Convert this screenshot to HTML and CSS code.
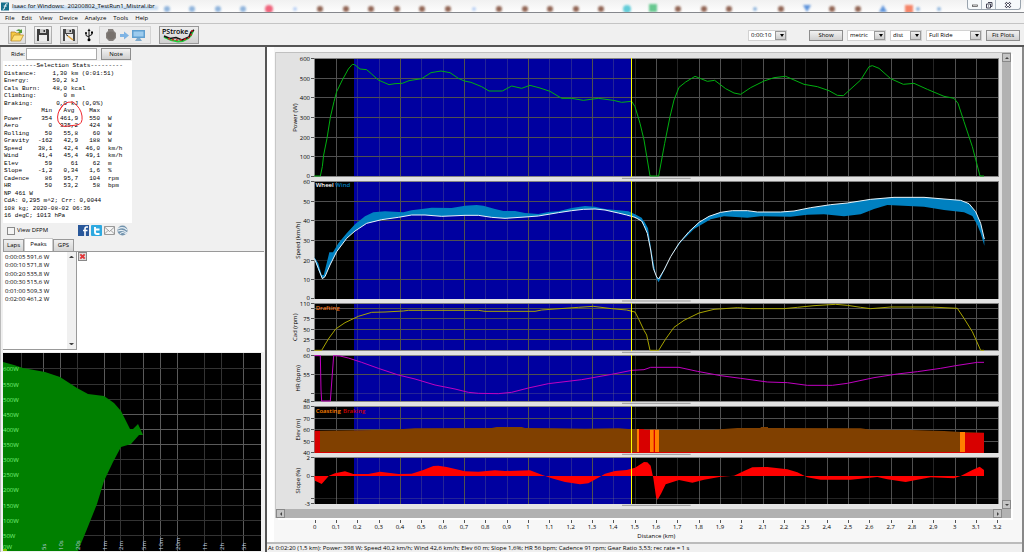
FILE: index.html
```html
<!DOCTYPE html>
<html lang="en">
<head>
<meta charset="utf-8">
<meta name="viewport" content="width=device-width, initial-scale=1">
<title>Isaac for Windows: 20200802_TestRun1_Mistral.ibr</title>
<link rel="stylesheet" href="styles.css">
</head>
<body>
<header class="titlebar">
  <svg class="glass" viewBox="0 0 1024 12" preserveAspectRatio="none" aria-hidden="true">
    <defs><filter id="soft" x="-50%" y="-50%" width="200%" height="200%"><feGaussianBlur stdDeviation="1"/></filter></defs>
    <g filter="url(#soft)">
      <g fill="#8fb4dc"><circle cx="167" cy="9" r="3"/><circle cx="192" cy="9" r="3"/><circle cx="218" cy="9" r="3"/><circle cx="243" cy="9" r="3"/><circle cx="755" cy="9" r="2"/><circle cx="918" cy="9" r="2"/><circle cx="939" cy="9" r="2"/></g>
      <g fill="#b9d0f5"><circle cx="295" cy="9" r="2"/><circle cx="474" cy="9" r="2"/></g>
      <g fill="#906452"><circle cx="320" cy="9" r="3"/><circle cx="346" cy="9" r="3"/><circle cx="371" cy="9" r="3"/><circle cx="397" cy="9" r="3"/><circle cx="422" cy="9" r="3"/><circle cx="448" cy="9" r="3"/><circle cx="499" cy="9" r="3"/><circle cx="525" cy="9" r="3"/><circle cx="550" cy="9" r="3"/><circle cx="576" cy="9" r="3"/><circle cx="601" cy="9" r="3"/><circle cx="678" cy="9" r="3"/><circle cx="704" cy="9" r="3"/><circle cx="729" cy="9" r="3"/><circle cx="781" cy="9" r="3"/><circle cx="832" cy="9" r="3"/><circle cx="858" cy="9" r="3"/></g>
      <circle cx="269" cy="9" r="4" fill="#f0647c"/>
      <circle cx="627" cy="9" r="4" fill="#62ccd8"/>
      <rect x="649" y="4" width="8" height="8" fill="#68c890"/>
      <path d="M803 5h8l-4 7zM883 5l4 7h-8z" fill="#5b92da"/>
      <rect x="905" y="5" width="8" height="8" fill="#f58468"/>
      <path d="M12 8H158" stroke="#c4daf1" stroke-width="4"/>
    </g>
  </svg>
  <svg class="app-icon" viewBox="0 0 9 9" aria-hidden="true"><rect width="9" height="9" fill="#176f8b"/><path d="M5.500 1.500H7.500M5.500 1.500L3.500 7.500H2M3 4H6.500" stroke="#fff" fill="none"/></svg>
  <span class="title">Isaac for Windows:&nbsp; 20200802_TestRun1_Mistral.ibr</span>
  <div class="window-buttons">
    <button aria-label="Minimize"><svg viewBox="0 0 8 8"><rect x="1.500" y="4" width="5" height="1.500" fill="#fff" stroke="#444" stroke-width=".7"/></svg></button>
    <button aria-label="Restore"><svg viewBox="0 0 8 8"><path d="M3 1.500H7V5.500H5.500M1.500 3H5.500V7H1.500ZM3 5H4" fill="none" stroke="#445"/></svg></button>
    <button class="close" aria-label="Close"><svg viewBox="0 0 8 8"><path d="M1.500 1.500L6.500 6.500M6.500 1.500L1.500 6.500" stroke="#445" stroke-width="2.400"/><path d="M1.500 1.500L6.500 6.500M6.500 1.500L1.500 6.500" stroke="#fff"/></svg></button>
  </div>
</header>

<nav class="menubar">
  <button>File</button><button>Edit</button><button>View</button><button>Device</button><button>Analyze</button><button>Tools</button><button>Help</button>
</nav>

<div class="toolbar">
  <button class="tool" aria-label="Open"><svg viewBox="0 0 14 14"><path d="M1 13V4h4l1 1h4v3" fill="#f5c944" stroke="#a9791a" stroke-width=".7"/><path d="M1 13L4 7h9.500l-3 6z" fill="#ffe27a" stroke="#b88520" stroke-width=".7"/><path d="M6 3q2-3 5-1l1-1v4H8l1.500-1.500Q8 2.500 6 3" fill="#4f9b35"/></svg></button>
  <button class="tool" aria-label="Save"><svg viewBox="0 0 14 14"><path d="M1 1h11l1 1v11H1z" fill="#3d3d3d"/><path d="M4 1h6v4H4z" fill="#c9c9c9"/><path d="M7.500 2h1.500v2H7.500z" fill="#333"/><path d="M3 7h8v6H3z" fill="#eee"/></svg></button>
  <button class="tool" aria-label="Save as"><svg viewBox="0 0 14 14"><path d="M1 1h11l1 1v11H1z" fill="#484848"/><path d="M4 1h6v4H4z" fill="#c9c9c9"/><path d="M7.500 2h1.500v2H7.500z" fill="#333"/><path d="M3 6h8v7H3z" fill="#eee"/><path d="M6 8l5 4" stroke="#e0a43a" stroke-width="1.600"/><path d="M4 6.500l2 1.500" stroke="#222"/></svg></button>
  <button class="tool flat" aria-label="USB"><svg viewBox="0 0 14 14"><path d="M7 2V11M7 9L4 7.500V5M7 8L10 6.500V4.500" fill="none" stroke="#111"/><path d="M5.500 3L7 .5 8.500 3z" fill="#111"/><circle cx="7" cy="11.800" r="1.500"/><circle cx="4" cy="5" r="1"/><path d="M9 3.500h2v2H9z"/></svg></button>
  <button class="tool wide" aria-label="Download from device" disabled><svg viewBox="0 0 42 14"><path d="M4 1h5l1 2 2 2v5l-3 3H5l-3-3V5l2-2z" fill="#85807d"/><circle cx="7" cy="7.500" r="4" fill="#77716d"/><path d="M16 6h4V3.500l5 4-5 4V9h-4z" fill="#7fb4e4"/><path d="M28 2h13v8H28z" fill="#5f9fd0"/><path d="M29.500 3.500h10v5h-10z" fill="#9ccbee"/><path d="M33 10h3l2 3h-7z" fill="#7da9cc"/></svg></button>
  <button class="tool pstroke" aria-label="PStroke"><svg viewBox="0 0 38 16"><path d="M4 10Q11 14 18 14.500Q30 14 33 4" fill="none" stroke="#24c83a" stroke-width="2"/><path d="M4 9L10 11.500L16 10.500L22 13L29 10L31 5L34 3" fill="none" stroke="#111" stroke-width="1.600"/><path d="M8 11.500Q16 14 24 12.500T32 3" fill="none" stroke="#d42020" stroke-width="1.500" stroke-dasharray="2 2"/><text x="2" y="7">PStroke</text></svg></button>
  <div class="controls">
    <label class="pick time"><select aria-label="Smoothing"><option>0:00:10</option></select></label>
    <button class="btn show">Show</button>
    <label class="pick units"><select aria-label="Units"><option>metric</option></select></label>
    <label class="pick axis"><select aria-label="X axis"><option>dist</option></select></label>
    <label class="pick range"><select aria-label="Range"><option>Full Ride</option></select></label>
    <button class="btn fit">Fit Plots</button>
  </div>
</div>

<main class="workspace">
  <aside class="side">
    <div class="ride"><label for="ride">Ride:</label><input id="ride" type="text"><button class="btn">Note</button></div>
    <section class="stats">
      <div>---------Selection Stats---------</div>
      <table>
        <tr><th>Distance:</th><td>1,30</td><td class="unit">km (0:01:51)</td></tr>
        <tr><th>Energy:</th><td>50,2</td><td class="unit">kJ</td></tr>
        <tr><th>Cals Burn:</th><td>48,0</td><td class="unit">kcal</td></tr>
        <tr><th>Climbing:</th><td>0</td><td class="unit">m</td></tr>
        <tr><th>Braking:</th><td>0,0</td><td class="unit">kJ (0,0%)</td></tr>
      </table>
      <table class="cols">
        <tr><th></th><td>Min</td><td>Avg&nbsp;</td><td>Max</td><td></td></tr>
        <tr><th>Power</th><td>354</td><td>461,9</td><td>550</td><td class="unit">W</td></tr>
        <tr><th>Aero</th><td>0</td><td>335,2</td><td>424</td><td class="unit">W</td></tr>
        <tr><th>Rolling</th><td>50</td><td>55,8</td><td>60</td><td class="unit">W</td></tr>
        <tr><th>Gravity</th><td>-162</td><td>42,9</td><td>188</td><td class="unit">W</td></tr>
        <tr><th>Speed</th><td>38,1</td><td>42,4</td><td>46,0</td><td class="unit">km/h</td></tr>
        <tr><th>Wind</th><td>41,4</td><td>45,4</td><td>49,1</td><td class="unit">km/h</td></tr>
        <tr><th>Elev</th><td>59</td><td>61</td><td>62</td><td class="unit">m</td></tr>
        <tr><th>Slope</th><td>-1,2</td><td>0,34</td><td>1,6</td><td class="unit">%</td></tr>
        <tr><th>Cadence</th><td>86</td><td>95,7</td><td>104</td><td class="unit">rpm</td></tr>
        <tr><th>HR</th><td>50</td><td>53,2</td><td>58</td><td class="unit">bpm</td></tr>
      </table>
      <div>NP 461 W</div>
      <div>CdA: 0,295 m^2; Crr: 0,0044</div>
      <div>108 kg; 2020-08-02 06:36</div>
      <div>16 degC; 1013 hPa</div>
      <svg class="mark" viewBox="0 0 30 30" aria-hidden="true"><path d="M7 5Q12 1 17 2Q25 8 26 16Q27 24 21 25L12 26Q5 28 2 21Q0 13 7 5L3 11" fill="none" stroke="#f02a30"/></svg>
    </section>
    <div class="share">
      <label><input type="checkbox"> View DFPM</label>
      <button aria-label="Facebook"><svg viewBox="0 0 11 11"><rect width="11" height="11" fill="#28579a"/><path d="M10 2H8.500Q7 2 7 4V11M5 5.500H9.500" fill="none" stroke="#fff" stroke-width="1.600"/></svg></button>
      <button aria-label="Twitter"><svg viewBox="0 0 11 11"><rect width="11" height="11" rx="1" fill="#2da9e0"/><path d="M4 2V7Q4 9 6 9H8.500M4 4.500H8.500" fill="none" stroke="#fff" stroke-width="1.900"/></svg></button>
      <button aria-label="Mail"><svg viewBox="0 0 11 11"><path d="M.5 1.500h10v8H.5z" fill="#f4f4f4" stroke="#999"/><path d="M.5 2L5.500 6.500 10.500 2M.5 9L4 5.500M10.500 9L7 5.500" fill="none" stroke="#888" stroke-width=".8"/></svg></button>
      <button aria-label="Google Earth"><svg viewBox="0 0 11 11"><circle cx="5.500" cy="5.500" r="5" fill="#7393ad"/><path d="M1 4Q6 1 10 5M1 6Q6 4 10 8M3 9Q5 6 9 9" fill="none" stroke="#e7f0f6" stroke-width="1.200"/></svg></button>
    </div>
    <div class="tabs" role="tablist">
      <button role="tab">Laps</button><button role="tab" class="active" aria-selected="true">Peaks</button><button role="tab">GPS</button>
    </div>
    <div class="peaks">
      <div class="list">
        <ul><li>0:00:05 591,6 W</li><li>0:00:10 571,8 W</li><li>0:00:20 535,8 W</li><li>0:00:30 515,6 W</li><li>0:01:00 509,3 W</li><li>0:02:00 461,2 W</li></ul>
        <div class="listbar"><i class="up"></i><i class="down"></i></div>
      </div>
      <button class="delete" aria-label="Delete peak"><svg viewBox="0 0 8 8"><path d="M1.500 1.500L6.500 6.500M6.500 1.500L1.500 6.500" stroke="#e2383c" stroke-width="2.200"/></svg></button>
    </div>
    <svg class="curve" viewBox="3 352 258 198" role="img" aria-label="Peak power curve">
      <rect x="3" y="352" width="258" height="198"/>
      <g shape-rendering="crispEdges">
        <path class="line dim" d="M21.500 352V550M77.500 352V550M120.500 352V550M204.500 352V550M221.500 352V550"/>
        <path class="line" d="M43.500 352V550M60.500 352V550M104.500 352V550M143.500 352V550M160.500 352V550M177.500 352V550M243.500 352V550"/>
        <path class="line dim" d="M3 367.500H261M3 383.500H261M3 398.500H261M3 458.500H261M3 473.500H261M3 504.500H261M3 519.500H261M3 534.500H261"/>
        <path class="line" d="M3 413.500H261M3 428.500H261M3 443.500H261M3 488.500H261"/>
      </g>
      <path fill="#008000" d="M3 361L14 364 23 367 45 371 60 376 77 387 88 393 104 395 114 402 121 410 130 428H133L138 423 143 434H139L131 443 121 446 113 461 104 480 97 503 87 528 80 545 78 550H3z"/>
      <g class="watts"><text x="3" y="370">600W</text><text x="3" y="386">550W</text><text x="3" y="401">500W</text><text x="3" y="416">450W</text><text x="3" y="431">400W</text><text x="3" y="446">350W</text><text x="3" y="461">300W</text><text x="3" y="476">250W</text><text x="3" y="491">200W</text><text x="3" y="507">150W</text><text x="3" y="522">100W</text><text x="3" y="537">50W</text><text x="3" y="548">0W</text></g>
      <g class="times"><text transform="translate(46 549)rotate(-90)">5s</text><text transform="translate(63 549)rotate(-90)">10s</text><text transform="translate(80 549)rotate(-90)">20s</text><text transform="translate(107 549)rotate(-90)">1m</text><text transform="translate(123 549)rotate(-90)">2m</text><text transform="translate(146 549)rotate(-90)">5m</text><text transform="translate(163 549)rotate(-90)">10m</text><text transform="translate(180 549)rotate(-90)">20m</text><text transform="translate(207 549)rotate(-90)">1h</text><text transform="translate(224 549)rotate(-90)">2h</text><text transform="translate(246 549)rotate(-90)">5h</text></g>
      <path d="M3 549h4" stroke="#ff0"/>
    </svg>
  </aside>

  <section class="main">
    <div class="frame">
      <svg class="plots" viewBox="33 159 2178 1368" role="img" aria-label="Ride plots">
        <defs>
          <path id="minor" d="M278 0V1600M342 0V1600M470 0V1600M534 0V1600M662 0V1600M726 0V1600M854 0V1600M918 0V1600M1046 0V1600M1110 0V1600M1238 0V1600M1430 0V1600M1622 0V1600M1814 0V1600M2006 0V1600"/>
          <path id="major" d="M214 0V1600M406 0V1600M598 0V1600M790 0V1600M982 0V1600M1174 0V1600M1302 0V1600M1366 0V1600M1494 0V1600M1558 0V1600M1686 0V1600M1750 0V1600M1878 0V1600M1942 0V1600M2070 0V1600M2134 0V1600"/>
          <path id="panes" d="M147 174H2202V531H147zM147 543H2202V897H147zM147 910H2202V1053H147zM147 1065H2202V1206H147zM147 1218H2202V1359H147zM147 1371H2202V1512H147z"/>
          <clipPath id="inside"><use href="#panes"/></clipPath>
        </defs>
        <use href="#panes"/>
        <g clip-path="url(#inside)" shape-rendering="crispEdges">
          <rect x="267" y="159" width="831" height="1368" fill="#0000a0"/>
          <use href="#minor" class="grid minor"/>
          <use href="#major" class="grid"/>
          <path class="grid" d="M147 236H2202M147 293H2202M147 353H2202M147 412H2202M147 470H2202M147 604H2202M147 661H2202M147 721H2202M147 838H2202M147 925H2202M147 956H2202M147 988H2202M147 1018H2202M147 1123H2202M147 1255H2202M147 1289H2202M147 1324H2202"/>
          <path class="grid minor" d="M147 781H2202M147 1181H2202M147 1496H2202"/>
        </g>
        <path class="edge" shape-rendering="crispEdges" d="M148 174V531M148 543V897M148 910V1053M148 1065V1206M148 1218V1359M148 1371V1512M147 175H2200V530H147M147 544H2200V896M147 911H2200V1052H147M147 1066H2200V1205H147M147 1219H2200V1358M147 1372H2200V1511"/>
        <path class="tick" shape-rendering="crispEdges" d="M138 176h10M138 236h10M138 293h10M138 353h10M138 412h10M138 470h10M138 529h10M138 544h10M138 604h10M138 661h10M138 721h10M138 781h10M138 838h10M138 895h10M138 911h10M138 925h10M138 956h10M138 988h10M138 1018h10M138 1051h10M138 1066h10M138 1123h10M138 1181h10M138 1205h10M138 1219h10M138 1255h10M138 1289h10M138 1324h10M138 1358h10M138 1372h10M138 1428h10M138 1496h10M138 1511h10"/>
        <g clip-path="url(#inside)">
          <polyline class="trace power" points="148,528 166,528 172,500 176,465 186,415 196,352 207,305 215,275 232,240 250,207 262,193 269,194 285,207 305,209 320,222 340,240 372,254 390,251 412,250 432,242 470,236 498,218 528,213 555,218 580,235 598,243 618,247 650,260 672,273 712,273 740,258 770,265 795,256 825,264 855,274 890,295 920,295 955,301 1000,295 1045,301 1070,307 1100,304 1110,320 1125,370 1137,420"/>
          <polyline class="trace power" transform="translate(1137)" points="0,420 18,528 44,528 62,430 78,350 90,300 105,262 125,246 153,229 190,244 212,241 245,266 270,279 290,283 320,263 360,243 390,233 425,229 480,253 520,260 555,272 580,286 598,287 650,240 675,200 685,197 705,205 740,236 778,253 810,250 850,268 900,289 930,295 942,310 960,365 985,440 1008,528 1020,528"/>
          <g transform="translate(0 525)">
            <path class="wind" d="M148 247L160 265 170 300H176L185 265 193 232H204L220 205 245 175 270 148 300 124 325 112 360 109 415 112 440 106 470 102 500 98 560 99 600 92 635 90 655 92 690 102 715 108 750 108 780 114 820 117 850 111 880 109 920 99 960 93 990 95 1020 102 1060 106 1090 109 1110 118 1130 128 1137 140V155L1130 138 1110 127 1085 120 1060 114 1020 105 990 102 955 103 920 107 880 113 820 123 780 126 720 130 680 127 640 121 600 121 530 124 480 120 440 120 400 127 350 134 305 145 270 168 245 190 215 230 195 270 180 305 172 312 160 285 148 250z"/>
            <polyline class="trace wheel" points="148,250 160,280 172,311 180,305 195,270 215,230 245,190 270,168 305,145 350,134 400,127 440,120 480,120 530,124 600,121 640,121 680,127 720,130 780,126 820,123 880,113 920,107 955,103 990,102 1020,105 1060,114 1085,120 1110,127 1130,138 1137,152"/>
            <polyline class="trace cadence" points="148,526 170,526 190,492 212,462 240,443 280,424 320,412 360,411 415,408 430,406 640,406 660,409 810,409 830,405 870,402 940,397 985,394 1040,401 1085,405 1110,411 1120,430 1137,466"/>
          </g>
          <g transform="translate(1137 525)">
            <path class="wind" d="M0 152L10 175 20 225 28 280 38 306 44 312 60 285 80 245 105 205 135 170 165 142 195 124 230 112 265 107H310L340 111H410L450 108 500 98 560 89 610 84 680 73 750 67H840L900 72 950 76 975 86 995 110 1010 145 1021 192V212L1010 175 1000 150 985 123 960 112 900 105 840 95 730 90 690 102 650 118 600 124 540 118 490 119 440 125 350 124 310 128 240 124 200 133 150 162 110 202 80 245 60 288 44 322 38 312 30 270 22 225 12 160 0 138z"/>
            <polyline class="trace wheel" points="0,152 10,175 20,225 28,280 38,306 44,312 60,285 80,245 105,205 135,170 165,142 195,124 230,112 265,107 310,107 340,111 410,111 450,108 500,98 560,89 610,84 680,73 750,67 840,67 900,72 950,76 975,86 995,110 1010,145 1021,192"/>
            <polyline class="trace cadence" points="0,466 8,480 18,526 44,526 65,492 90,457 120,436 165,414 210,403 240,401 280,398 320,401 420,401 460,397 510,392 575,388 610,391 650,397 680,401 740,396 860,396 940,400 960,430 985,470 1010,526 1020,526"/>
          </g>
          <g transform="translate(0 1035)">
            <polyline class="trace heart" points="148,32 166,32 168,135 170,168 196,168 206,32 225,33 250,39 290,52 340,70 400,90 450,102 510,120 570,132 610,142 640,145 700,146 740,142 790,129 850,116 950,104 1040,88 1100,76 1137,74"/>
            <path class="ground" d="M165 323V257L380 254 450 250 680 249 695 246H770L780 249 870 250 960 251 1060 250 1100 253H1137V323z"/>
            <path class="brake" d="M149 257H165V323H149zM1122 252H1137V323H1122z"/><path class="coast" d="M1116 252h6v71h-6z"/>
            <path class="brake" d="M149 321H1137v3H149z"/>
            <path class="slope" d="M148 393L150 407 158 411 170 417 178 408 192 392 210 385 240 379 265 387H310L345 380 400 387 440 386 475 375 505 363 520 362 545 366 600 379 640 380 690 376 720 378 795 376 830 389 860 400 900 411 945 418 970 415 1005 395 1020 386 1050 378 1085 375 1110 368 1137 351V393z"/>
          </g>
          <g transform="translate(1137 1035)">
            <polyline class="trace heart" points="0,74 20,67 105,67 160,79 230,92 290,100 370,111 430,113 490,121 565,121 610,115 690,98 760,87 820,80 890,70 935,62 1000,52 1020,52"/>
            <path class="ground" d="M0 323V254H210L280 249H350V246H372V249L650 250 680 254 800 255 900 258 950 261 1020 264V323z"/>
            <path class="brake" d="M0 254H18V323H0zM963 263h57v60h-57z"/><path class="coast" d="M18 254h27v69H18zM948 261h15v62h-15z"/><path class="brake" d="M29 254h4v69h-4zM0 321H1020v3H0z"/>
            <path class="slope" d="M0 393V351L10 352 20 362 28 400 36 455 41 464 52 445 65 418 105 405 145 413 180 404 230 395 270 392 300 378 325 367 370 366 430 373 460 382 490 397 530 404H620L700 396 730 403 785 411 820 404 860 397 930 400 950 393 985 375 1007 365 1020 375V393z"/>
          </g>
          <path d="M1099 159V1527" stroke="#ffff00" stroke-width="3" shape-rendering="crispEdges"/>
        </g>
        <path class="handle" d="M1071 535h206M1071 903h206M1071 1057h206M1071 1210h206M1071 1363h206M1071 1516h206"/>
        <g class="ylabels">
          <text x="135" y="183">600</text><text x="135" y="243">500</text><text x="135" y="300">400</text><text x="135" y="360">300</text><text x="135" y="419">200</text><text x="135" y="477">100</text><text x="135" y="534">0</text>
          <text x="135" y="552">60</text><text x="135" y="611">50</text><text x="135" y="668">40</text><text x="135" y="728">30</text><text x="135" y="788">20</text><text x="135" y="845">10</text><text x="135" y="901">0</text>
          <text x="135" y="919">110</text><text x="135" y="963">75</text><text x="135" y="995">50</text><text x="135" y="1025">25</text><text x="135" y="1057">0</text>
          <text x="135" y="1074">60</text><text x="135" y="1130">55</text><text x="135" y="1210">48</text>
          <text x="135" y="1227">80</text><text x="135" y="1262">70</text><text x="135" y="1296">60</text><text x="135" y="1331">50</text><text x="135" y="1364">40</text>
          <text x="135" y="1381">2</text><text x="135" y="1435">0</text><text x="135" y="1518">-3</text>
        </g>
        <g class="ytitles">
          <text transform="translate(96 353)rotate(-90)">Power (W)</text><text transform="translate(106 721)rotate(-90)">Speed (km/h)</text><text transform="translate(96 982)rotate(-90)">Cad (rpm)</text><text transform="translate(106 1135)rotate(-90)">HR (bpm)</text><text transform="translate(106 1289)rotate(-90)">Elev (m)</text><text transform="translate(106 1442)rotate(-90)">Slope (%)</text>
        </g>
        <g class="legend"><text x="152" y="562" fill="#fff">Wheel</text><text x="211" y="562" fill="#0080c0">Wind</text><text x="152" y="931" fill="#e87018">Drafting</text><text x="152" y="1238" fill="#ff8000">Coasting</text><text x="234" y="1238" fill="#d00000">Braking</text></g>
      </svg>
      <div class="vbar"><i class="up"></i><i class="down"></i></div>
      <div class="hbar"><i class="left"></i><i class="right"></i></div>
    </div>
    <svg class="xaxis" viewBox="33 1560 2178 66" role="img" aria-label="Distance axis">
      <path class="tick" shape-rendering="crispEdges" d="M150 1560v9M214 1560v9M278 1560v9M342 1560v9M406 1560v9M470 1560v9M534 1560v9M598 1560v9M662 1560v9M726 1560v9M790 1560v9M854 1560v9M918 1560v9M982 1560v9M1046 1560v9M1110 1560v9M1174 1560v9M1238 1560v9M1302 1560v9M1366 1560v9M1430 1560v9M1494 1560v9M1558 1560v9M1622 1560v9M1686 1560v9M1750 1560v9M1814 1560v9M1878 1560v9M1942 1560v9M2006 1560v9M2070 1560v9M2134 1560v9M2198 1560v9"/>
      <g class="xlabels"><text x="149" y="1587">0</text><text x="213" y="1587">0,1</text><text x="277" y="1587">0,2</text><text x="341" y="1587">0,3</text><text x="405" y="1587">0,4</text><text x="469" y="1587">0,5</text><text x="533" y="1587">0,6</text><text x="597" y="1587">0,7</text><text x="661" y="1587">0,8</text><text x="725" y="1587">0,9</text><text x="789" y="1587">1</text><text x="853" y="1587">1,1</text><text x="917" y="1587">1,2</text><text x="981" y="1587">1,3</text><text x="1045" y="1587">1,4</text><text x="1109" y="1587">1,5</text><text x="1173" y="1587">1,6</text><text x="1237" y="1587">1,7</text><text x="1301" y="1587">1,8</text><text x="1365" y="1587">1,9</text><text x="1429" y="1587">2</text><text x="1493" y="1587">2,1</text><text x="1557" y="1587">2,2</text><text x="1621" y="1587">2,3</text><text x="1685" y="1587">2,4</text><text x="1749" y="1587">2,5</text><text x="1813" y="1587">2,6</text><text x="1877" y="1587">2,7</text><text x="1941" y="1587">2,8</text><text x="2005" y="1587">2,9</text><text x="2069" y="1587">3</text><text x="2133" y="1587">3,1</text><text x="2197" y="1587">3,2</text><text x="1174" y="1615">Distance (km)</text></g>
    </svg>
    <footer class="status">At 0:02:20 (1,5 km): Power: 398 W; Speed 40,2 km/h; Wind 42,6 km/h; Elev 60 m; Slope 1,6%; HR 56 bpm; Cadence 91 rpm; Gear Ratio 3,53; rec rate = 1 s</footer>
  </section>
</main>
</body>
</html>
```

FILE: styles.css
```css
* { box-sizing: border-box; }
body {
  margin: 0;
  min-height: 100vh;
  display: flex;
  flex-direction: column;
  background: #f0f0f0;
  color: #000;
  font: 6px/9px "Open Sans", "Noto Sans", sans-serif;
}
button, input, select { font: inherit; color: inherit; margin: 0; padding: 0; }
button { border: 0; background: none; }
svg { display: block; }

/* title bar */
.titlebar {
  position: relative;
  display: flex;
  align-items: center;
  gap: 3px;
  height: 13px;
  padding-left: 1px;
  overflow: hidden;
  border-bottom: 1px solid #85878c;
  background: linear-gradient(#f1f1f1, #fdfdfd);
}
.glass { position: absolute; inset: 0; width: 100%; height: 100%; }
.app-icon { position: relative; width: 8px; height: 9px; }
.title { position: relative; white-space: pre; }
.window-buttons {
  position: relative;
  display: flex;
  align-self: flex-start;
  height: 10px;
  margin: 0 3px 0 auto;
  border: 1px solid #9aa4ae;
  border-top: 0;
  border-radius: 0 0 3px 3px;
  background: #f6f9fb;
}
.window-buttons button { display: grid; place-items: center; width: 14px; border-right: 1px solid #b0bac4; }
.window-buttons .close { width: 24px; border: 0; }
.window-buttons svg { width: 8px; height: 8px; }

.menubar { display: flex; gap: 7px; height: 10px; padding-left: 5px; }
.menubar button { line-height: 9px; }

/* toolbar */
.toolbar {
  display: flex;
  align-items: center;
  gap: 8px;
  height: 24px;
  padding: 0 4px 0 8px;
  border-top: 1px solid #c4c4c4;
  border-bottom: 2px solid #555;
}
.tool {
  display: grid;
  place-items: center;
  width: 18px;
  height: 18px;
  border: 1px solid #b0b0b0;
  background: linear-gradient(#f5f5f5, #ddd);
}
.tool svg { width: 14px; height: 14px; }
.tool.flat { border: 0; background: none; width: 15px; margin: 0 -5px; }
.tool.wide { width: 52px; border-color: #d4d4d4; background: #ebebeb; }
.tool.wide svg { width: 42px; }
.tool.pstroke { width: 40px; border-color: #999; background: linear-gradient(#eee, #d0d0d0); }
.tool.pstroke svg { width: 38px; height: 16px; }
.pstroke text { font-size: 7px; font-weight: 600; }
.controls { display: flex; align-items: center; margin: 2px 0 0 auto; gap: 4px; }
.btn { height: 11px; border: 1px solid #8d8d8d; background: linear-gradient(#f2f2f2, #cfcfcf); line-height: 9px; }
.pick { position: relative; display: block; height: 11px; border: 1px solid #d2d2d2; background: #fff; }
.pick select { display: block; width: 100%; height: 9px; padding-left: 2px; border: 0; background: none; appearance: none; line-height: 9px; }
.pick::before {
  content: "";
  position: absolute;
  inset: 0 0 0 auto;
  width: 9px;
  border: 1px solid #999;
  background: linear-gradient(#eee, #ccc);
  pointer-events: none;
}
.pick::after {
  content: "";
  position: absolute;
  right: 2px;
  top: 3px;
  border: 3px solid transparent;
  border-width: 3px 2px 0;
  border-top-color: #000;
  pointer-events: none;
}
.time { width: 39px; margin-right: 18px; }
.show, .fit { width: 34px; }
.units { width: 39px; }
.axis { width: 32px; }
.range { width: 56px; }

/* left column */
.workspace { flex: 1; display: flex; min-width: 0; }
.side { flex: 0 0 264px; display: flex; flex-direction: column; padding-left: 2px; border-left: 1px solid #bbb; }
.ride { display: flex; align-items: center; height: 14px; padding-left: 8px; }
.ride label { width: 15px; }
.ride input { width: 71px; height: 12px; border: 1px solid #aaa; background: #fff; }
.ride .btn { width: 30px; height: 12px; margin-left: 4px; }
.stats {
  position: relative;
  width: 129px;
  height: 162px;
  padding: 1px;
  background: #fff;
  font: 6px/1.25 "Liberation Mono", monospace;
  white-space: nowrap;
}
.stats table { border-collapse: collapse; table-layout: fixed; width: 100%; }
.stats th, .stats td { padding: 0; font-weight: 400; text-align: right; line-height: 1.25; }
.stats th { width: 34px; text-align: left; }
.stats td:nth-child(2) { width: 29px; }
.cols td:nth-child(2) { width: 14px; }
.cols td:nth-child(3) { width: 26px; }
.cols td:nth-child(4) { width: 22px; }
.stats .unit { padding-left: 4px; text-align: left; }
.stats .cols td:nth-child(2) { width: 14px; }
.stats .cols .unit { padding-left: 8px; }
.mark { position: absolute; left: 53px; top: 39px; width: 30px; height: 30px; }
.share { display: flex; align-items: center; gap: 2px; height: 15px; padding-left: 4px; }
.share label { display: flex; align-items: center; gap: 2px; width: 69px; }
.share input { width: 8px; height: 8px; appearance: none; border: 1px solid #8a8a8a; background: #f4f4f4; }
.share svg { width: 11px; height: 11px; }
.tabs { display: flex; align-items: flex-end; height: 13px; }
.tabs button { width: 21px; height: 12px; border: 1px solid #999; border-bottom: 0; background: linear-gradient(#f0f0f0, #d4d4d4); }
.tabs .active { width: 29px; height: 13px; padding-bottom: 2px; border-color: #ccc; background: #fff; }
.peaks { display: flex; gap: 1px; height: 101px; padding-bottom: 2px; border-top: 1px solid #999; background: #fff; }
.list { display: flex; justify-content: space-between; width: 74px; border: 1px solid #999; border-width: 0 1px 1px 0; line-height: 1.4; }
.list ul { margin: 0; padding: 1px 0 0 2px; list-style: none; white-space: nowrap; }
.listbar, .vbar, .hbar { display: flex; justify-content: space-between; }
.listbar { flex-direction: column; width: 9px; padding: 4px 2px; background: #f0f0f0; }
.listbar i { border: 2px solid transparent; }
.listbar .up { border-top: 0; border-bottom-color: #444; }
.listbar .down { border-bottom: 0; border-top-color: #444; }
.delete { width: 9px; height: 9px; border: 1px solid #888; background: #ddd; }
.delete svg { width: 7px; height: 7px; }
.curve { width: 258px; margin-top: 1px; }
.line { stroke: #5a5a5a; }
.line.dim { stroke: #333; }
.watts { fill: #7cf07c; }
.times { fill: #c4d4e0; }

/* plot area */
.main {
  flex: 1;
  min-width: 0;
  display: flex;
  flex-direction: column;
  margin-left: 1px;
  border-left: 2px solid #555;
  border-right: 2px solid #888;
  background: linear-gradient(90deg, #fff 7px, #f7f7f7 7px);
}
.frame {
  display: grid;
  grid-template-columns: 1fr 9px;
  margin: 5px 11px 0 9px;
  border-top: 1px solid #c0c0c0;
  background: #e2e2e2;
  box-shadow: -1px 0 #c8c8c8, 2px 2px #fff;
}
.plots { width: 100%; }
.grid { stroke: #505050; stroke-width: 3; }
.grid.minor { stroke: #808080; stroke-opacity: .28; }
.edge { fill: none; stroke: #858585; stroke-width: 3; }
.tick { stroke: #555; stroke-width: 3; }
.trace { fill: none; stroke-width: 3; }
.power { stroke: #00b010; }
.wheel { stroke: #e8f4fa; }
.cadence { stroke: #a8a400; }
.heart { stroke: #c000c0; }
.wind { fill: #0080c0; }
.ground { fill: #804000; }
.brake { fill: #d80000; }
.coast { fill: #ff8000; }
.slope { fill: #ff0000; }
.handle { stroke: #999; stroke-width: 3; }
.plots text, .xaxis text { font-size: 18px; }
.ylabels { text-anchor: end; }
.ytitles, .xlabels { text-anchor: middle; }
.plots .legend text { font-weight: 600; }
.vbar, .hbar { background: #b2b2b2; }
.vbar { flex-direction: column; }
.hbar { grid-column: 1 / -1; height: 9px; padding-right: 9px; }
.vbar i, .hbar i { display: grid; place-items: center; width: 9px; height: 9px; border: 1px solid #888; background: #c4c4c4; }
.vbar i::before, .hbar i::before { content: ""; border: 2px solid transparent; }
.vbar .up::before { border-top: 0; border-bottom-color: #444; }
.vbar .down::before { border-bottom: 0; border-top-color: #444; }
.hbar .left::before { border-left: 0; border-right-color: #444; }
.hbar .right::before { border-right: 0; border-left-color: #444; }
.xaxis { margin: 2px 20px 0 9px; }
.status { margin-top: auto; padding-left: 1px; border-top: 2px solid #bbb; background: #f0f0f0; line-height: 9px; white-space: nowrap; }
```
